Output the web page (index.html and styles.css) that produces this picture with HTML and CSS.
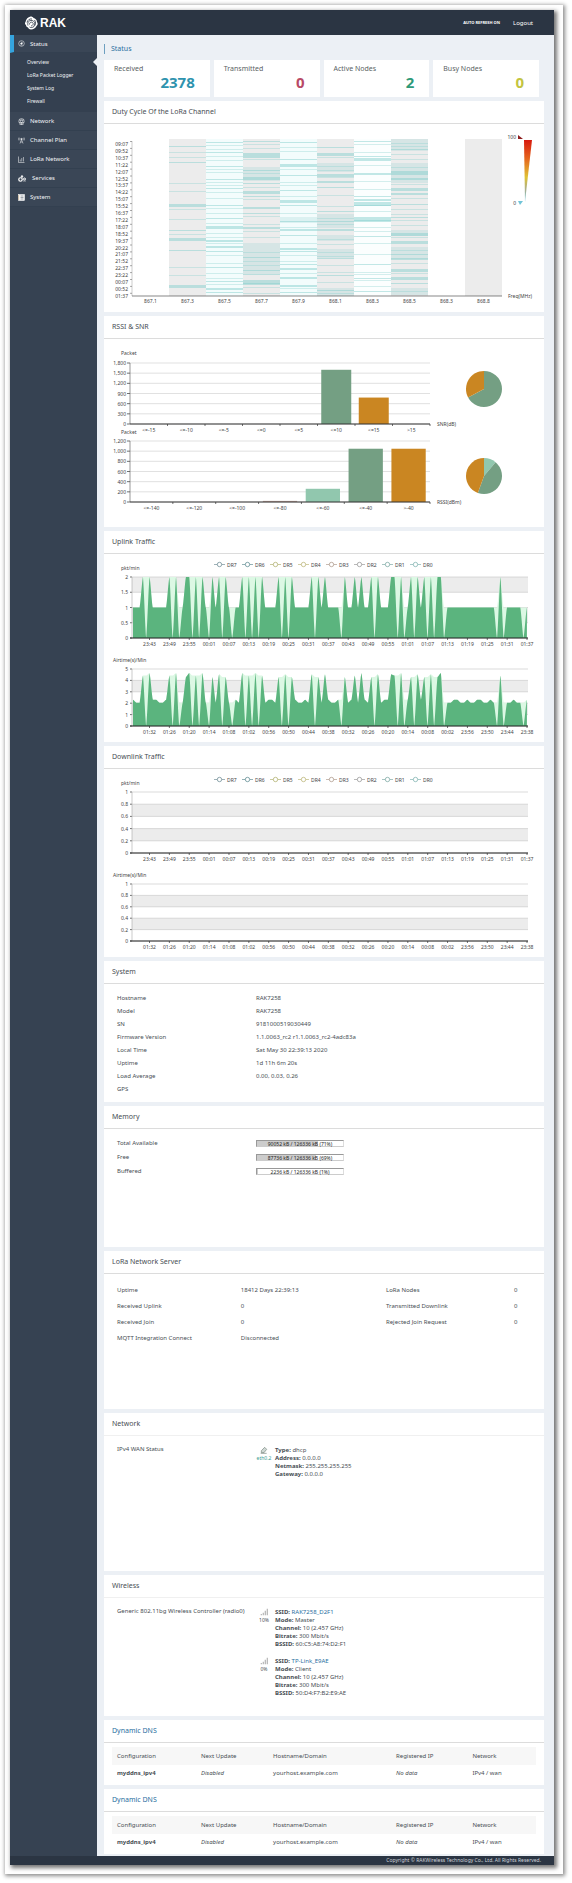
FILE: index.html
```html
<!DOCTYPE html>
<html lang="en">
<head>
<meta charset="utf-8">
<title>RAK - Overview</title>
<link rel="stylesheet" href="styles.css">
</head>
<body>
<div class="frame">
<div class="app">
  <header class="topbar">
    <a class="brand" href="#">
      <svg class="brand-mark" viewBox="0 0 28 28" aria-hidden="true">
        <path fill="#fff" d="M3 12C4 6 8 2 13 1c3 0 5 1 6 3 4 1 7 4 7 8 2 2 2 6-1 8-2 4-6 7-11 7-3 0-5-2-6-4-3-1-4-3-4-5-2-1-3-4-1-6z"/>
        <path fill="none" stroke="#2b3543" stroke-width="1.6" d="M6 13c1-5 5-8 10-7M8 19c-2-6 2-11 8-10 5 1 7 6 4 10M11 17c0-4 3-6 6-4s1 6-3 7M21 8c3 4 3 9-1 13M11 22c3 2 6 1 9-1"/>
      </svg>
      <span>RAK</span>
    </a>
    <nav class="top-links">
      <button type="button" class="refresh">AUTO REFRESH ON</button>
      <a href="#">Logout</a>
    </nav>
  </header>
  <div class="columns">
    <nav class="sidebar">
      <a class="item current" href="#">
        <svg viewBox="0 0 14 14" aria-hidden="true"><circle cx="7" cy="7" r="5.6"/><path d="M7 7l3-2M4 7h1M7 3.500v1M4.800 10h4.400"/><circle cx="7" cy="7" r="1.500" fill="#fff"/></svg>Status</a>
      <div class="submenu">
        <a class="here" href="#">Overview</a>
        <a href="#">LoRa Packet Logger</a>
        <a href="#">System Log</a>
        <a href="#">Firewall</a>
      </div>
      <a class="item" href="#">
        <svg viewBox="0 0 14 14" aria-hidden="true"><circle cx="7" cy="6.500" r="5.500"/><circle cx="7" cy="6.500" r="2.500"/><path d="M2 4h10M2 9h10M7 9v4M3 13h8"/></svg>Network</a>
      <a class="item" href="#">
        <svg viewBox="0 0 14 14" aria-hidden="true"><path d="M2 1c-1 2-1 4 0 6M12 1c1 2 1 4 0 6M4.500 2c-1 1-1 3 0 4M9.500 2c1 1 1 3 0 4M7 5l-3 8M7 5l3 8M5 10h4"/><circle cx="7" cy="4" r="1.200" fill="#fff"/></svg>Channel Plan</a>
      <a class="item" href="#">
        <svg viewBox="0 0 14 14" aria-hidden="true"><path d="M1 1v12h12M4.500 11V7M7.500 11V4M11 11V2"/></svg>LoRa Network</a>
      <a class="item" href="#">
        <svg class="wide" viewBox="0 0 18 14" aria-hidden="true"><circle cx="5" cy="9" r="3.500" stroke-width="2.400"/><circle cx="8" cy="3" r="1.800" fill="#fff"/><circle cx="13" cy="8" r="2" stroke-width="2"/><path d="M10 12h6"/></svg>Services</a>
      <a class="item" href="#">
        <svg viewBox="0 0 14 14" aria-hidden="true"><rect x="1" y="1" width="12" height="12" fill="#fff"/><path stroke="#c9a36b" d="M1.500 2v10"/><path stroke="#3a4656" d="M5 4h6M5 7h6M5 10h6"/></svg>System</a>
    </nav>
    <main class="content">
      <h1>Status</h1>
      <section class="stats">
        <div class="stat"><span>Received</span><b class="blue">2378</b></div>
        <div class="stat"><span>Transmitted</span><b class="red">0</b></div>
        <div class="stat"><span>Active Nodes</span><b class="green">2</b></div>
        <div class="stat"><span>Busy Nodes</span><b class="lime">0</b></div>
      </section>

      <section class="card"><h2>Duty Cycle Of the LoRa Channel</h2><svg class="chart" id="duty" viewBox="0 0 440 188" role="img" aria-label="Duty cycle heat map"></svg></section>
      <section class="card"><h2>RSSI &amp; SNR</h2><svg class="chart" id="signal" viewBox="0 0 440 188" role="img" aria-label="RSSI and SNR"></svg></section>
      <section class="card"><h2>Uplink Traffic</h2><svg class="chart" id="uplink" viewBox="0 0 440 188" role="img" aria-label="Uplink traffic"></svg></section>
      <section class="card"><h2>Downlink Traffic</h2><svg class="chart" id="downlink" viewBox="0 0 440 188" role="img" aria-label="Downlink traffic"></svg></section>

      <section class="card">
        <h2>System</h2>
        <dl class="facts">
          <dt>Hostname</dt><dd>RAK7258</dd>
          <dt>Model</dt><dd>RAK7258</dd>
          <dt>SN</dt><dd>9181000519030449</dd>
          <dt>Firmware Version</dt><dd>1.1.0063_rc2 r1.1.0063_rc2-4adc83a</dd>
          <dt>Local Time</dt><dd>Sat May 30 22:39:13 2020</dd>
          <dt>Uptime</dt><dd>1d 11h 6m 20s</dd>
          <dt>Load Average</dt><dd>0.00, 0.03, 0.26</dd>
          <dt>GPS</dt><dd></dd>
        </dl>
      </section>

      <section class="card medium">
        <h2>Memory</h2>
        <dl class="facts memory">
          <dt>Total Available</dt><dd><div class="meter"><i style="width:71%"></i><span>90052 kB / 126336 kB (71%)</span></div></dd>
          <dt>Free</dt><dd><div class="meter"><i style="width:69%"></i><span>87736 kB / 126336 kB (69%)</span></div></dd>
          <dt>Buffered</dt><dd><div class="meter"><i style="width:1%"></i><span>2236 kB / 126336 kB (1%)</span></div></dd>
        </dl>
      </section>

      <section class="card tall">
        <h2>LoRa Network Server</h2>
        <table class="server">
          <tr><td>Uptime</td><td>18412 Days 22:39:13</td><td>LoRa Nodes</td><td>0</td></tr>
          <tr><td>Received Uplink</td><td>0</td><td>Transmitted Downlink</td><td>0</td></tr>
          <tr><td>Received Join</td><td>0</td><td>Rejected Join Request</td><td>0</td></tr>
          <tr><td>MQTT Integration Connect</td><td>Disconnected</td><td></td><td></td></tr>
        </table>
      </section>

      <section class="card tall">
        <h2 class="faint">Network</h2>
        <div class="device">
          <span>IPv4 WAN Status</span>
          <div class="link">
            <div class="badge teal">
              <svg viewBox="0 0 12 12" aria-hidden="true"><path fill="#cfd8d4" stroke="#77857f" d="M2 7l5-5 3 3-4 5H2z"/><path stroke="#77857f" d="M1 11h9"/></svg>
              eth0.2
            </div>
            <p><b>Type:</b> dhcp<br><b>Address:</b> 0.0.0.0<br><b>Netmask:</b> 255.255.255.255<br><b>Gateway:</b> 0.0.0.0</p>
          </div>
        </div>
      </section>

      <section class="card medium">
        <h2 class="faint">Wireless</h2>
        <div class="device">
          <span>Generic 802.11bg Wireless Controller (radio0)</span>
          <div>
            <div class="link">
              <div class="badge">
                <svg viewBox="0 0 12 12" aria-hidden="true"><path stroke="#bbb" stroke-width="2" d="M2 11V9M5 11V7M8 11V4M11 11V1"/></svg>
                10%
              </div>
              <p><b>SSID:</b> <a href="#">RAK7258_D2F1</a><br><b>Mode:</b> Master<br><b>Channel:</b> 10 (2.457 GHz)<br><b>Bitrate:</b> 300 Mbit/s<br><b>BSSID:</b> 60:C5:A8:74:D2:F1</p>
            </div>
            <div class="link">
              <div class="badge">
                <svg viewBox="0 0 12 12" aria-hidden="true"><path stroke="#bbb" stroke-width="2" d="M2 11V9M5 11V7M8 11V4M11 11V1"/></svg>
                0%
              </div>
              <p><b>SSID:</b> <a href="#">TP-Link_E9AE</a><br><b>Mode:</b> Client<br><b>Channel:</b> 10 (2.457 GHz)<br><b>Bitrate:</b> 300 Mbit/s<br><b>BSSID:</b> 50:D4:F7:B2:E9:AE</p>
            </div>
          </div>
        </div>
      </section>

      <section class="card">
        <h2><a href="#">Dynamic DNS</a></h2>
        <table class="ddns">
          <tr><th>Configuration</th><th>Next Update</th><th>Hostname/Domain</th><th>Registered IP</th><th>Network</th></tr>
          <tr><td><b>myddns_ipv4</b></td><td><i>Disabled</i></td><td>yourhost.example.com</td><td><i>No data</i></td><td>IPv4 / wan</td></tr>
        </table>
      </section>
      <section class="card">
        <h2><a href="#">Dynamic DNS</a></h2>
        <table class="ddns">
          <tr><th>Configuration</th><th>Next Update</th><th>Hostname/Domain</th><th>Registered IP</th><th>Network</th></tr>
          <tr><td><b>myddns_ipv4</b></td><td><i>Disabled</i></td><td>yourhost.example.com</td><td><i>No data</i></td><td>IPv4 / wan</td></tr>
        </table>
      </section>
    </main>
  </div>
  <footer>Copyright © RAKWireless Technology Co., Ltd. All Rights Reserved.</footer>
</div>
</div>
<script src="charts.js"></script>
</body>
</html>
```

FILE: styles.css
```css
* { box-sizing: border-box; }

body {
  margin: 0;
  padding: 5px 9px 9px 5px;
  background: #fff;
  color: #484e54;
  font: 6px/8px "Noto Sans", "Open Sans", sans-serif;
}

a { color: #2a6f9f; text-decoration: none; }

.frame {
  padding: 5px 9px 9px 5px;
  background: #fff;
  box-shadow: 1px 1px 4px 1px #8c8c8c;
}

.app { box-shadow: 2px 2px 4px 1px #777; }

.topbar {
  display: flex;
  align-items: center;
  justify-content: space-between;
  height: 25px;
  padding: 0 21px 0 14px;
  background: #2b3543;
}

.brand {
  display: flex;
  align-items: center;
  gap: 2px;
  color: #fff;
  font: bold 12px/14px "Liberation Sans", Arial, sans-serif;
}

.brand-mark { width: 14px; height: 14px; }

.top-links { display: flex; align-items: center; gap: 13px; }
.top-links a { color: #fff; }

.refresh {
  padding: 0;
  border: 0;
  background: none;
  color: #fff;
  font: bold 4px/8px "Noto Sans", sans-serif;
}

.columns { display: flex; }

.sidebar { flex: 0 0 87px; background: #364252; }

.item {
  display: flex;
  align-items: center;
  gap: 5px;
  height: 19px;
  padding-left: 8px;
  border-bottom: 1px solid #334050;
  background: #3a4656;
  color: #f2f4f6;
}

.item svg { width: 7px; height: 7px; fill: none; stroke: #fff; }
.item svg.wide { width: 9px; }
.item.current { height: 18px; padding-left: 4px; border-left: 4px solid #35a4de; }

.submenu { display: flex; flex-direction: column; padding: 3px 0 4px; background: #344050; }

.submenu a {
  position: relative;
  padding-left: 17px;
  color: #f2f4f6;
  font-size: 5px;
  line-height: 13px;
}

.submenu .here::after {
  content: "";
  position: absolute;
  top: 2px;
  right: 0;
  border: 4px solid transparent;
  border-right-color: #ecf0f5;
  border-left-width: 0;
}

.content {
  flex: 1;
  display: flex;
  flex-direction: column;
  gap: 4px;
  min-width: 0;
  padding: 9px 10px 2px 7px;
  background: #ecf0f5;
}

h1 {
  margin: 0 0 2px;
  padding-left: 6px;
  border-left: 1px solid #6d9fc0;
  color: #2a6f9f;
  font-size: 7px;
  font-weight: 400;
  line-height: 10px;
}

.stats {
  display: grid;
  grid-template-columns: repeat(4, 1fr);
  gap: 4px;
  padding-right: 5px;
}

.stat {
  display: flex;
  flex-direction: column;
  height: 37px;
  padding: 4px 15px 0 10px;
  background: #fff;
  color: #5a5f64;
  font-size: 7px;
  line-height: 10px;
}

.stat b { align-self: flex-end; font-size: 15px; line-height: 16px; }
.blue { color: #2e93ae; }
.red { color: #b84a66; }
.green { color: #2f9a78; }
.lime { color: #c3c43f; }

.card { background: #fff; }
.card.medium { min-height: 141px; }
.card.tall { min-height: 158px; }

h2 {
  margin: 0;
  padding: 6px 8px;
  border-bottom: 1px solid #dcdcdc;
  font-size: 7px;
  font-weight: 400;
  line-height: 10px;
}

h2.faint { border-color: #f0f0f0; }

.chart { display: block; width: 100%; }
.chart text { fill: #444; font-size: 5px; }

.facts {
  display: grid;
  grid-template-columns: 139px 1fr;
  grid-auto-rows: 13px;
  align-items: center;
  margin: 0;
  padding: 7px 13px;
}

.facts dd { margin: 0; }
.facts.memory { grid-auto-rows: 14px; }

.meter {
  position: relative;
  width: 88px;
  height: 7px;
  border: 1px solid #999;
  border-right-color: #ddd;
  border-bottom-color: #ccc;
}

.meter i { display: block; height: 100%; background: #ccc; }
.meter span { position: absolute; inset: 0; color: #222; font-size: 5px; line-height: 6px; text-align: center; }

table { border-collapse: collapse; table-layout: fixed; }
th, td { padding: 0; font-weight: 400; text-align: left; }

.server { width: calc(100% - 13px); margin: 8px 0 0 13px; }
.server td { width: 34%; height: 16px; }
.server td:nth-child(1) { width: 29%; }
.server td:nth-child(3) { width: 30%; }
.server td:nth-child(4) { width: 7%; }

.device {
  display: grid;
  grid-template-columns: 139px 1fr;
  padding: 9px 13px 8px;
}

.device > span { white-space: nowrap; }
.link { display: grid; grid-template-columns: 19px 1fr; margin: 1px 0 9px; }
.link p { margin: 0; }
.badge { display: flex; flex-direction: column; align-items: center; width: 16px; font-size: 5px; }
.badge svg { width: 8px; height: 8px; fill: none; }
.teal { color: #3a9c94; }

.ddns { width: calc(100% - 16px); margin: 4px 8px 5px; }
.ddns th { height: 18px; width: 17%; background: #f7f7f7; }
.ddns td { height: 15px; }
.ddns th:first-child { width: 21%; }
.ddns th:nth-child(3) { width: 29%; }
.ddns th:nth-child(4) { width: 18%; }
.ddns th:last-child { width: 15%; }
.ddns th:first-child, .ddns td:first-child { padding-left: 5px; }

footer {
  height: 9px;
  padding-right: 13px;
  background: #2b3543;
  color: #cfd4da;
  font-size: 5px;
  line-height: 9px;
  text-align: right;
}
```

FILE: charts.js
```js
const NS = "http://www.w3.org/2000/svg";

function add(svg, tag, attrs, text) {
  const el = document.createElementNS(NS, tag);
  for (const key in attrs) el.setAttribute(key, attrs[key]);
  if (text !== undefined) el.textContent = text;
  svg.appendChild(el);
  return el;
}
const label = (svg, x, y, text, anchor = "middle") =>
  add(svg, "text", { x, y: y + 2, "text-anchor": anchor }, text);
const line = (svg, x1, y1, x2, y2, stroke = "#333", w = 1) =>
  add(svg, "line", { x1, y1, x2, y2, stroke, "stroke-width": w });
const box = (svg, x, y, width, height, fill, opacity = 1) =>
  add(svg, "rect", { x, y, width, height, fill, opacity });
const clock = m => {
  m = (m + 1440) % 1440;
  return String(Math.floor(m / 60)).padStart(2, "0") + ":" + String(m % 60).padStart(2, "0");
};

/* Duty cycle: each column lists "row", or "row-height" for a thicker run. */
function drawDuty() {
  const svg = document.getElementById("duty");
  const left = 28, top = 15, colW = 37, height = 157;
  const names = ["867.1", "867.3", "867.5", "867.7", "867.9", "868.1", "868.3", "868.5", "868.3", "868.8"];
  const runs = [
    "",
    "7 13 18 23 44 52 65-3 70 80 91 95 99-3 111 128 136 146-3",
    "3 6 10 13 17 21 27 30 33 40 43 46 49 53 59 66 69 74 79 84 87-2 89 94 98 101-2 104 107-2 112 116 124 128 134 139 142 145 149-2 153",
    "2 5 9 14-5 20 28-14 31 34 38-3 44 48 52-3 57 60 68-2 74 77 85 88-2 92 98 104-6 110-26 113 118 122 126 131 135 141-5 144 148 154",
    "3 8 12 20 25-3 30 36 43 46 51 57 61-3 66 74 78-6 82 88 90-2 96 104 109-2 112 116 122 125 129-2 134 138-2 146-2 149 153",
    "8 14-3 18 24-9 27 31 35-3 38 42-2 48 56 67 72 75-14 79 82 85 90-2 96-6 100 105 110-9 113 117 119 126 133 136 143 149-8 151 154",
    "2 5 13 17 19-3 26 34-2 42 50 57 60-2 63-4 66 72 78-5 81 88 92 97 104 115 125 133 135 139 141 147 152",
    "0-12 4 7 10 15 20 24-20 28 32-3 35 39-2 45 49-3 54-2 59 65 70 75 78 81 86 91-6 94-3 98 102-3 108-12 111 115 119-2 124 130-3 134 138-3 144 149-7 152",
    "", ""
  ];
  runs.forEach((list, c) => {
    const x = left + c * colW;
    if (c % 2) box(svg, x, top, colW, height, "#ececec");
    else if (list) box(svg, x, top, colW, height, c === 6 ? "#fbfefe" : "#f3fcfc");
    if (!list) return;
    list.split(" ").forEach((run, i) => {
      const [row, h] = run.split("-").map(Number);
      box(svg, x, top + row, colW, h || 1, "#87cfce", h > 5 ? 0.22 : h ? 0.5 : i % 3 ? 0.34 : 0.5);
    });
  });
  names.forEach((n, c) => label(svg, left + colW * (c + 0.5), 177, n));
  line(svg, left, top + 2, left, top + height, "#999", 0.5);
  line(svg, left, top + height, left + 370, top + height, "#555", 0.7);
  for (let i = 0; i < 23; i++) {
    label(svg, 24, 20 + i * 6.9, clock(547 + i * 45), "end");
    line(svg, 26, 17.500 + i * 6.9, 28, 17.500 + i * 6.9, "#555", 0.5);
  }
  label(svg, 404, 172, "Freq(MHz)", "start");
  const defs = add(svg, "defs", {});
  const grad = add(defs, "linearGradient", { id: "heat", x1: 0, y1: 0, x2: 0, y2: 1 });
  [["0", "#d7190f"], ["0.3", "#e5661d"], ["0.6", "#e0c334"], ["0.8", "#a9ae8d"], ["1", "#70c4d8"]]
    .forEach(([offset, c]) => add(grad, "stop", { offset, "stop-color": c }));
  add(svg, "path", { d: "M420 16h8l-7 62z", fill: "url(#heat)" });
  add(svg, "path", { d: "M414 11v4h5z", fill: "#8e1c1c" });
  add(svg, "path", { d: "M414 77h5l-3 4z", fill: "#70c4d8" });
  label(svg, 412, 13, "100", "end");
  label(svg, 412, 79, "0", "end");
}

function drawBars(svg, o) {
  const left = 26, width = 300, step = width / o.names.length;
  label(svg, 17, o.top - 10 + (o.shift || 0), "Packet", "start");
  for (let v = 0, i = 0; v <= o.max; v += o.tick, i++) {
    const y = o.top + o.height * (1 - v / o.max);
    line(svg, left, y, left + width, y, "#ccc", 0.6);
    line(svg, left - 3, y, left, y, "#333", 0.7);
    label(svg, 22, y, v.toLocaleString("en-US"), "end");
  }
  line(svg, left, o.top, left, o.top + o.height, "#555", 0.6);
  o.values.forEach(([v, fill], i) => {
    const h = o.height * v / o.max;
    if (v) box(svg, left + step * (i + 0.1), o.top + o.height - h, step * 0.8, h, fill);
  });
  line(svg, left, o.top + o.height, left + width, o.top + o.height, "#333", 1);
  o.names.forEach((n, i) => {
    line(svg, left + step * (i + 1), o.top + o.height, left + step * (i + 1), o.top + o.height + 2, "#333", 0.7);
    label(svg, left + step * (i + 0.5), o.top + o.height + 6, n);
  });
  label(svg, 333, o.top + o.height, o.unit, "start");
}

function drawPie(svg, cx, cy, r, slices) {
  let a = 0;
  const at = d => `${cx + r * Math.sin(d * Math.PI / 180)} ${cy - r * Math.cos(d * Math.PI / 180)}`;
  slices.forEach(([deg, fill]) => {
    add(svg, "path", { fill, d: `M${cx} ${cy}L${at(a)}A${r} ${r} 0 ${deg > 180 ? 1 : 0} 1 ${at(a + deg)}Z` });
    a += deg;
  });
}

function drawSignal() {
  const svg = document.getElementById("signal");
  const green = "#749f83", orange = "#ca8622", mint = "#91c7ae";
  drawBars(svg, {
    top: 24, height: 61, max: 1800, tick: 300, unit: "SNR(dB)",
    names: ["<=-15", "<=-10", "<=-5", "<=0", "<=5", "<=10", "<=15", ">15"],
    values: [[0], [0], [0], [0], [0], [1600, green], [780, orange], [0]]
  });
  drawBars(svg, {
    top: 102, height: 61, max: 1200, tick: 200, unit: "RSSI(dBm)", shift: 1,
    names: ["<=-140", "<=-120", "<=-100", "<=-80", "<=-60", "<=-40", ">-40"],
    values: [[0], [0], [0], [22, "#bda29a"], [260, mint], [1048, green], [1048, orange]]
  });
  drawPie(svg, 380, 50, 18, [[242, green], [118, orange]]);
  drawPie(svg, 380, 137, 18, [[40, mint], [160, green], [160, orange]]);
}

/* Packets per minute, one digit a minute. */
const PACKETS = [
  "111", "202", "11111", "2020", "1", "22", "0202", "10", "212", "0210", "11",
  "2020202", "1111", "20202", "11111", "20212", "1111", "02", "11", "212", "11",
  "202", "111", "22", "020", "1", "20212020", "22", "0", "111111111111111",
  "020", "11111", "01"
].join("").split("").map(Number);

function smooth(points) {
  let d = "";
  for (let i = 1; i < points.length; i++) {
    const [x0, y0] = points[i - 1], [x1, y1] = points[i], w = (x1 - x0) * 0.3;
    d += `C${x0 + w} ${y0 * 0.85 + y1 * 0.15} ${x1 - w} ${y1 * 0.85 + y0 * 0.15} ${x1} ${y1}`;
  }
  return d;
}

function drawTime(svg, o) {
  const left = 28, right = 424, bottom = o.top + o.height;
  const yOf = v => bottom - o.height * v / o.max;
  o.bands.forEach(([a, b]) => box(svg, left, yOf(b), right - left, yOf(a) - yOf(b), "#ececec"));
  o.ticks.forEach(v => {
    line(svg, left, yOf(v), right, yOf(v), "#ccc", 0.7);
    line(svg, left - 2, yOf(v), left, yOf(v), "#333", 0.7);
    label(svg, 24, yOf(v), String(v), "end");
  });
  line(svg, left, o.top, left, bottom, "#aaa", 0.6);
  if (o.data) {
    const xOf = i => 29 + i * 3.31;
    const area = (vals, fill) => {
      const pts = vals.map((v, i) => [xOf(i), yOf(v)]);
      add(svg, "path", { fill, d: `M${xOf(0)} ${bottom}L${pts[0].join(" ")}${smooth(pts)}L${xOf(vals.length - 1)} ${bottom}Z` });
    };
    area(o.data.map((v, i) => v || Math.min(o.data[i - 1] || 0, o.data[i + 1] || 0)), "#dcf8e4");
    area(o.data, "#5bb47e");
  }
  line(svg, left - 2, bottom, right, bottom, "#222", 1);
  for (let k = 0; k < 20; k++) {
    const x = 45.5 + k * 19.87;
    line(svg, x, bottom, x, bottom + 2, "#333", 0.7);
    label(svg, x, bottom + 6, clock(o.start + o.step * k));
  }
  label(svg, o.titleX, o.titleY, o.title, "start");
}

function drawTraffic(id, first, second) {
  const svg = document.getElementById(id);
  const colors = ["#5f7f89", "#4f7f86", "#a8a860", "#b5ae6a", "#a58f80", "#8c8c8c", "#6f9f9a", "#72aaa8"];
  colors.forEach((c, i) => {
    const x = 110 + i * 28;
    line(svg, x, 10.500, x + 11, 10.500, c, 0.6);
    add(svg, "circle", { cx: x + 5.5, cy: 10.500, r: 2.200, fill: "#fff", stroke: c, "stroke-width": 0.7 });
    label(svg, x + 13, 10.500, "DR" + (7 - i), "start");
  });
  drawTime(svg, Object.assign({ top: 23, height: 61, start: -17, step: 6, title: "pkt/min", titleX: 17, titleY: 14 }, first));
  drawTime(svg, Object.assign({ top: 115, height: 57, start: 92, step: -6, title: "Airtime(s)/Min", titleX: 9, titleY: 106 }, second));
}

drawDuty();
drawSignal();
drawTraffic("uplink",
  { max: 2, ticks: [0, 0.5, 1, 1.5, 2], bands: [[0.5, 1], [1.5, 2]], data: PACKETS },
  { max: 5, ticks: [0, 1, 2, 3, 4, 5], bands: [[1, 2], [3, 4]],
    data: PACKETS.map((v, i) => v === 2 ? 4.3 + (i * 7 % 4) * 0.12 : v ? 2.05 + (i * 5 % 7 < 3 ? 0.25 : 0) : 0) });
const tenths = { max: 1, ticks: [0, 0.2, 0.4, 0.6, 0.8, 1], bands: [[0.2, 0.4], [0.6, 0.8]] };
drawTraffic("downlink", tenths, tenths);
```
